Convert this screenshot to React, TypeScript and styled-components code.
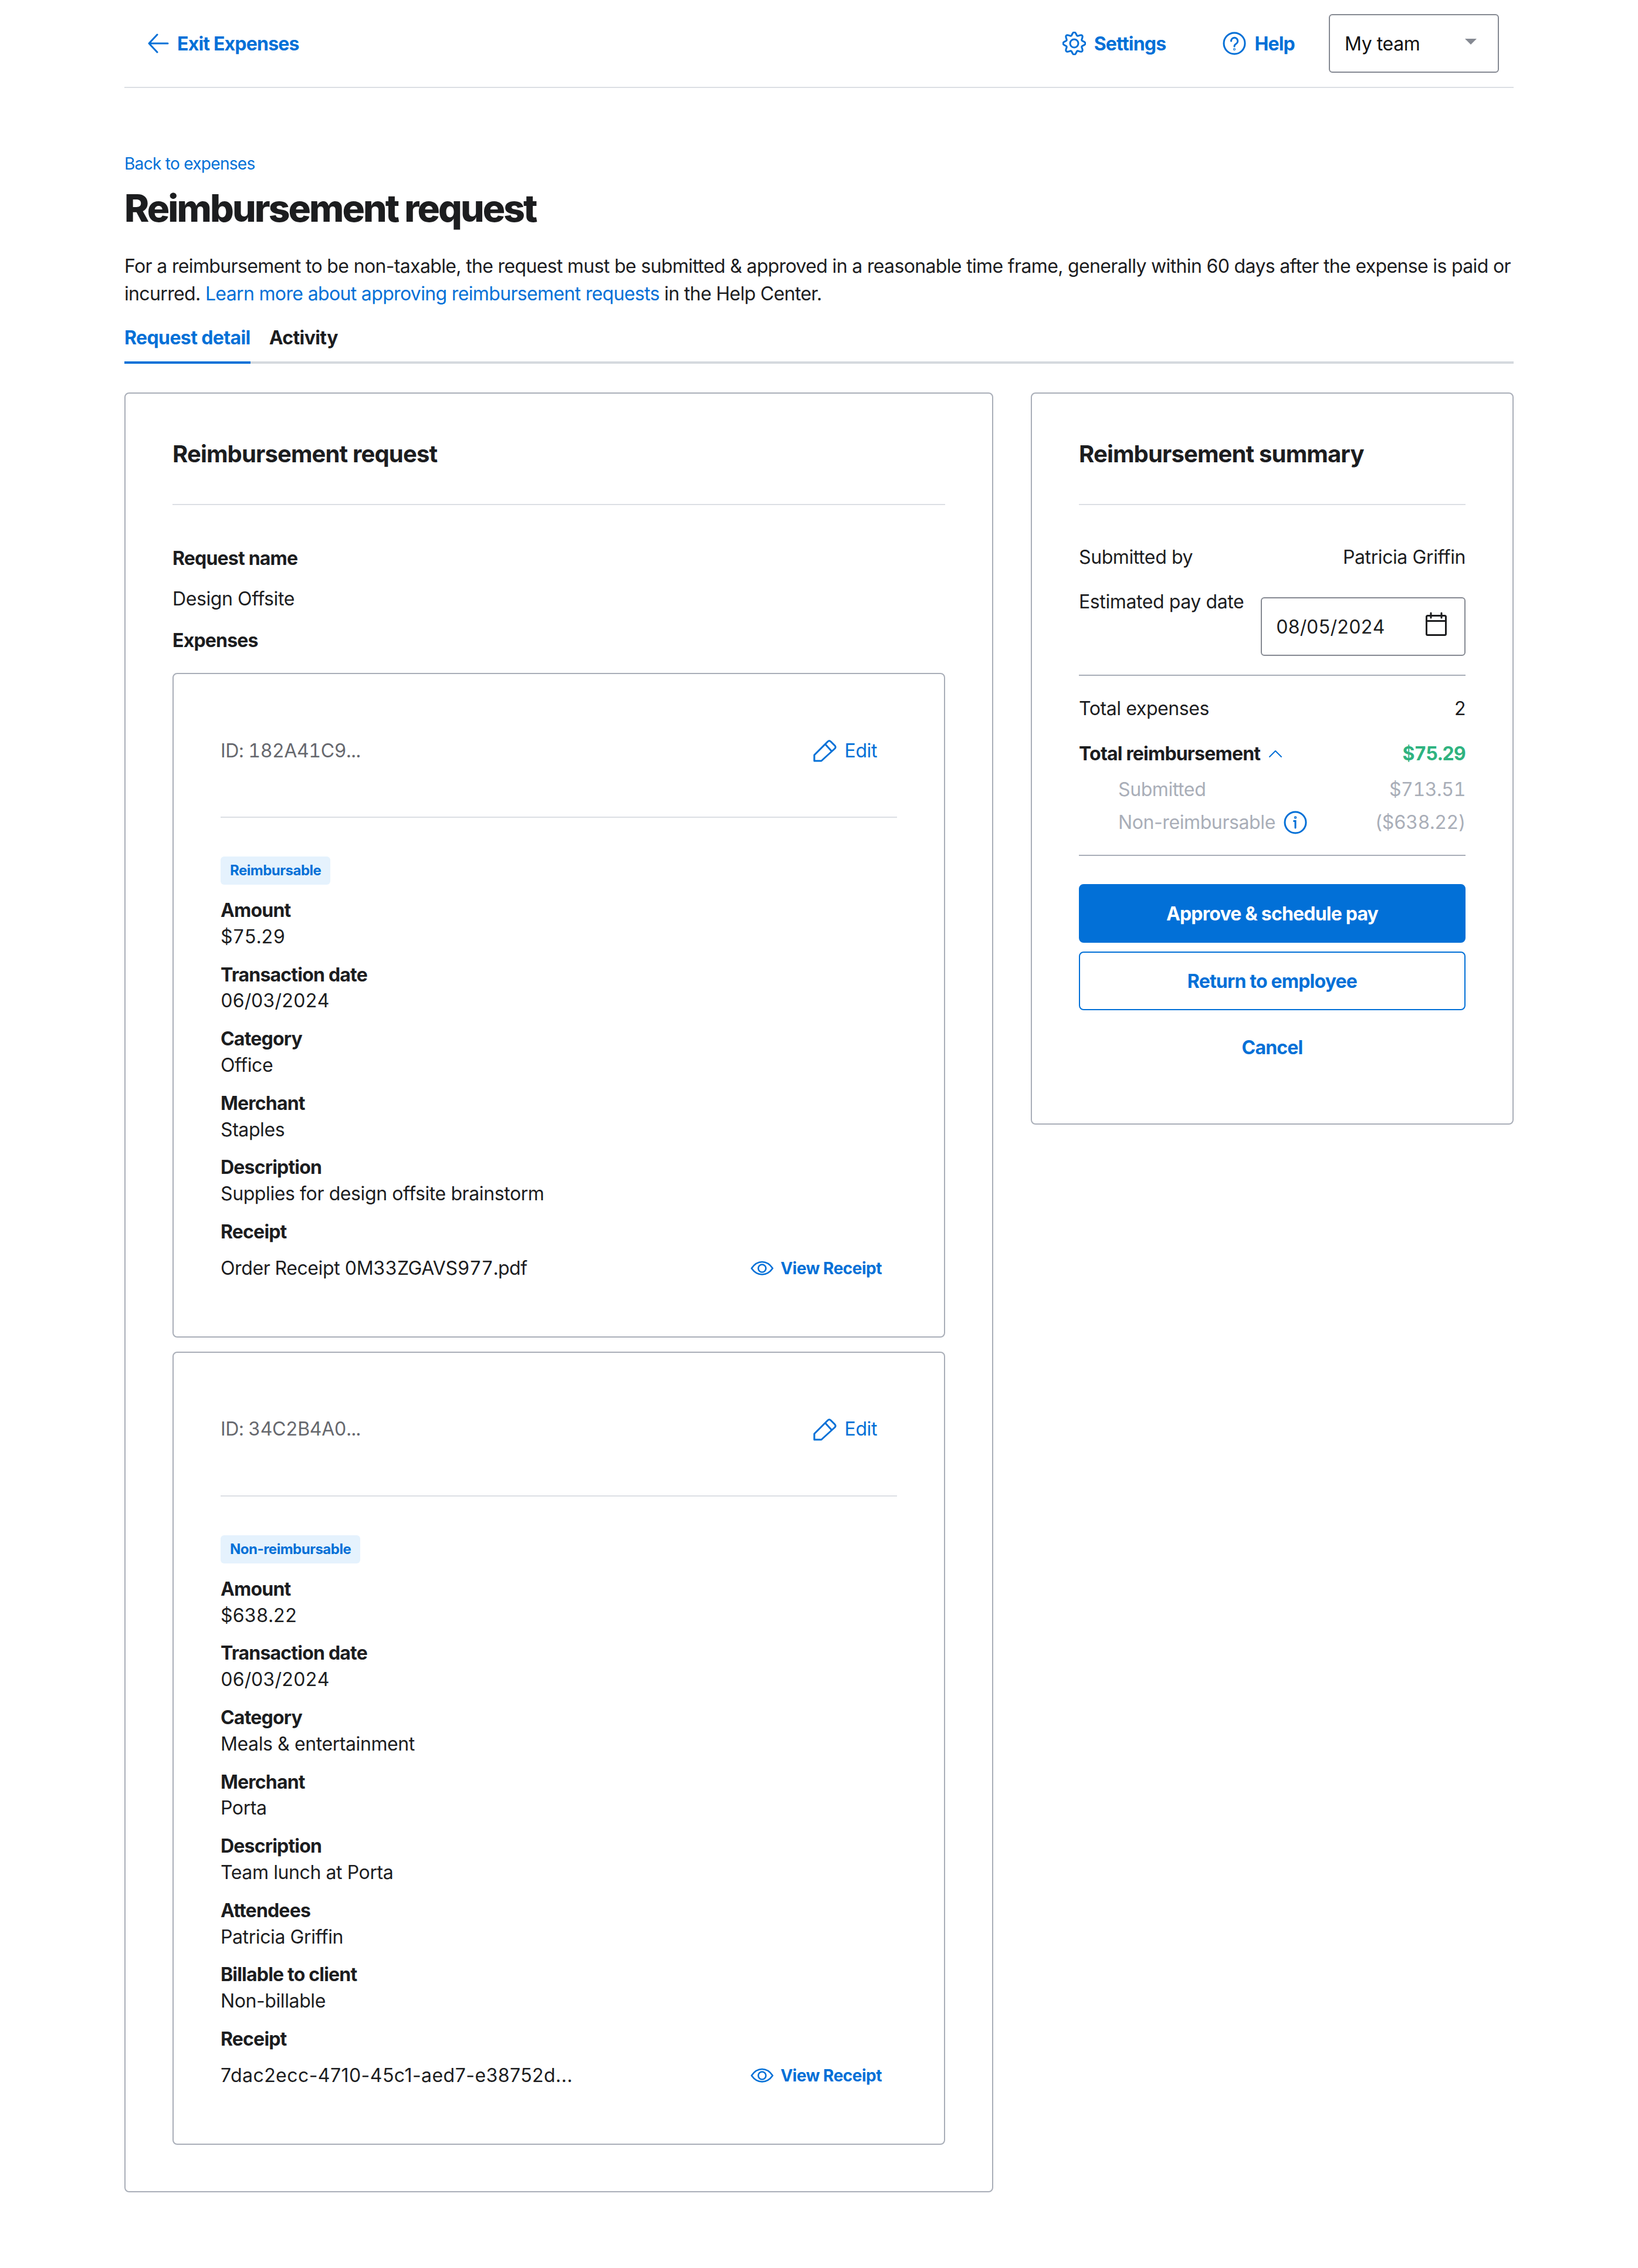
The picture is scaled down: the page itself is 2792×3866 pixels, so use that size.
import React from "react";
import styled, { createGlobalStyle } from "styled-components";

const BLUE = "#0270d7";
const INK = "#1c1d1f";
const EDGE = "#a9aeb8";
const RULE = "#dcdfe4";
const MUTED = "#a9aeb8";

const GlobalStyle = createGlobalStyle`
  html, body { margin: 0; padding: 0; background: #fff; }
  body {
    font-family: "Inter", "Liberation Sans", sans-serif;
    font-size: 32px;
    line-height: 45px;
    color: ${INK};
    letter-spacing: -0.4px;
  }
  * { box-sizing: border-box; }
`;

const Page = styled.div`
  width: 2792px;
  height: 3866px;
  padding: 0 212px;
`;

const TopBar = styled.header`
  height: 150px;
  padding: 0 25px 0 40px;
  border-bottom: 2px solid ${RULE};
  display: flex;
  align-items: center;
  justify-content: space-between;
`;

const NavLink = styled.a`
  display: flex;
  align-items: center;
  gap: 14px;
  color: ${BLUE};
  font-weight: 700;
  font-size: 32px;
  letter-spacing: -0.8px;
`;

const TopRight = styled.div`
  display: flex;
  align-items: center;
  gap: 97px;
`;

const TeamGroup = styled.div`
  display: flex;
  align-items: center;
  gap: 58px;
`;

const TeamSelect = styled.div`
  width: 290px;
  height: 100px;
  border: 2px solid #858992;
  border-radius: 6px;
  padding: 0 36px 0 25px;
  display: flex;
  align-items: center;
  justify-content: space-between;
  color: #111;
`;

const Caret = styled.span`
  width: 0;
  height: 0;
  margin-bottom: 6px;
  border-left: 10px solid transparent;
  border-right: 10px solid transparent;
  border-top: 10px solid #858992;
`;

const BackLink = styled.a`
  display: block;
  margin-top: 109px;
  color: ${BLUE};
  font-size: 28px;
  line-height: 40px;
  letter-spacing: -0.7px;
`;

const Title = styled.h1`
  margin: 16px 0 0;
  font-size: 64px;
  line-height: 80px;
  font-weight: 800;
  letter-spacing: -2.9px;
`;

const Intro = styled.p`
  margin: 35px 0 29px;
  line-height: 47px;
  letter-spacing: -0.65px;
`;

const InlineLink = styled.a`
  color: ${BLUE};
`;

const Tabs = styled.div`
  display: flex;
  gap: 32px;
  border-bottom: 4px solid #d5d9de;
`;

const Tab = styled.div<{ $active?: boolean }>`
  padding-bottom: 18px;
  margin-bottom: -4px;
  font-weight: 700;
  font-size: 32px;
  letter-spacing: -0.6px;
  color: ${(p) => (p.$active ? BLUE : INK)};
  border-bottom: 4px solid ${(p) => (p.$active ? BLUE : "transparent")};
`;

const Columns = styled.div`
  margin-top: 49px;
  display: flex;
  align-items: flex-start;
  gap: 64px;
`;

const Card = styled.section<{ $width: number; $bottom: number }>`
  width: ${(p) => p.$width}px;
  border: 2px solid ${EDGE};
  border-radius: 8px;
  padding: 78px 80px ${(p) => p.$bottom}px;
`;

const CardTitle = styled.h2`
  margin: 0;
  padding-bottom: 60px;
  border-bottom: 2px solid ${RULE};
  font-size: 40px;
  line-height: 50px;
  font-weight: 700;
  letter-spacing: -0.85px;
`;

const Strong = styled.div`
  font-weight: 700;
  font-size: 32px;
  letter-spacing: -0.8px;
`;

const RequestName = styled(Strong)`
  margin-top: 68px;
`;

const RequestValue = styled.div`
  margin-top: 24px;
`;

const ExpensesLabel = styled(Strong)`
  margin-top: 26px;
  margin-bottom: 33px;
`;

const ExpenseList = styled.div`
  display: flex;
  flex-direction: column;
  gap: 24px;
`;

const ExpenseCard = styled.article`
  border: 2px solid ${EDGE};
  border-radius: 8px;
  padding: 105px 80px 90px;
`;

const ExpenseHead = styled.div`
  height: 50px;
  padding-right: 34px;
  display: flex;
  align-items: center;
  justify-content: space-between;
`;

const ExpenseId = styled.span`
  color: #66686e;
  font-variant-numeric: tabular-nums;
`;

const EditLink = styled.a`
  display: flex;
  align-items: center;
  gap: 10px;
  color: ${BLUE};
`;

const ExpenseRule = styled.hr`
  margin: 88px 0 66px;
  border: 0;
  border-top: 2px solid ${RULE};
`;

const Badge = styled.span`
  display: inline-block;
  height: 48px;
  padding: 0 16px;
  border-radius: 6px;
  background: #e5f2fd;
  color: ${BLUE};
  font-size: 24px;
  line-height: 48px;
  font-weight: 700;
  letter-spacing: -0.5px;
  vertical-align: top;
`;

const Fields = styled.dl`
  margin: 22px 0 0;
  display: flex;
  flex-direction: column;
  gap: 20px;
`;

const Field = styled.div`
  line-height: 44.8px;
`;

const FieldLabel = styled.dt`
  font-weight: 700;
  font-size: 32px;
  letter-spacing: -0.8px;
`;

const FieldValue = styled.dd<{ $numeric?: boolean }>`
  margin: 0;
  font-variant-numeric: ${(p) => (p.$numeric ? "tabular-nums" : "normal")};
`;

const ReceiptRow = styled.dd`
  margin: 15px 0 0;
  padding-right: 26px;
  display: flex;
  align-items: center;
  justify-content: space-between;
`;

const ReceiptName = styled.span<{ $hash?: boolean }>`
  font-variant-numeric: ${(p) => (p.$hash ? "normal" : "tabular-nums")};
  letter-spacing: ${(p) => (p.$hash ? "0.45px" : "-0.4px")};
`;

const ViewLink = styled.a`
  display: flex;
  align-items: center;
  gap: 6px;
  color: ${BLUE};
  font-weight: 700;
  font-size: 28px;
  letter-spacing: -0.5px;
`;

const Row = styled.div<{ $muted?: boolean; $gap?: number; $indent?: boolean }>`
  display: flex;
  justify-content: space-between;
  align-items: flex-start;
  margin-top: ${(p) => p.$gap ?? 0}px;
  padding-left: ${(p) => (p.$indent ? 67 : 0)}px;
  color: ${(p) => (p.$muted ? MUTED : INK)};
`;

const DateBox = styled.div`
  width: 349px;
  height: 100px;
  margin-top: 15px;
  padding: 0 18px 0 24px;
  border: 2px solid #858992;
  border-radius: 6px;
  display: flex;
  align-items: center;
  justify-content: space-between;
  color: ${INK};
  font-variant-numeric: tabular-nums;
`;

const SummaryRule = styled.hr<{ $gap: number }>`
  margin: ${(p) => p.$gap}px 0 0;
  border: 0;
  border-top: 2px solid ${EDGE};
`;

const LabelWithIcon = styled.span`
  display: flex;
  align-items: center;
  gap: 14px;
`;

const Amount = styled.span`
  font-variant-numeric: tabular-nums;
`;

const Money = styled(Strong)`
  color: #2fb380;
  font-variant-numeric: tabular-nums;
`;

const Button = styled.button<{ $primary?: boolean }>`
  display: block;
  width: 100%;
  height: 100px;
  border: 2px solid ${BLUE};
  border-radius: 8px;
  background: ${(p) => (p.$primary ? BLUE : "#fff")};
  color: ${(p) => (p.$primary ? "#fff" : BLUE)};
  font: 700 32px/45px "Inter", "Liberation Sans", sans-serif;
  letter-spacing: -0.8px;
`;

const PrimaryButton = styled(Button)`
  margin-top: 48px;
`;

const SecondaryButton = styled(Button)`
  margin-top: 15px;
`;

const CancelLink = styled(Strong)`
  margin-top: 41px;
  text-align: center;
  color: ${BLUE};
`;

const gearPoints = Array.from({ length: 120 }, (_, i) => {
  const a = (i / 120) * Math.PI * 2 - Math.PI / 8;
  const r = 16.5 + 2.6 * Math.cos(a * 8);
  return `${(20 + r * Math.cos(a)).toFixed(2)},${(20 + r * Math.sin(a)).toFixed(2)}`;
}).join(" ");

const ArrowIcon = () => (
  <svg width="36" height="36" viewBox="0 0 36 36" fill="none" stroke={BLUE} strokeWidth="3" strokeLinecap="round" strokeLinejoin="round">
    <path d="M2 18h32M16 3 2 18l14 15" />
  </svg>
);

const GearIcon = () => (
  <svg width="40" height="40" viewBox="0 0 40 40" fill="none" stroke={BLUE} strokeWidth="3">
    <polygon points={gearPoints} strokeLinejoin="round" />
    <circle cx="20" cy="20" r="7" />
  </svg>
);

const HelpIcon = () => (
  <svg width="40" height="40" viewBox="0 0 40 40" fill="none" stroke={BLUE} strokeWidth="3" strokeLinecap="round">
    <circle cx="20" cy="20" r="18" />
    <path d="M14.5 16a5.6 5.6 0 1 1 8.4 4.8c-2 1.2-2.9 2.2-2.9 4.2" />
    <circle cx="20" cy="30" r="0.6" />
  </svg>
);

const PencilIcon = () => (
  <svg width="50" height="50" viewBox="0 0 50 50" fill="none" stroke={BLUE} strokeWidth="3" strokeLinejoin="round">
    <path d="M8 33 31 10c1.500-1.500 3.500-1.500 5 0l7 7c1.500 1.500 1.500 3.500 0 5L20 43H8z" />
    <path d="m27 15 11 12" />
  </svg>
);

const EyeIcon = () => (
  <svg width="50" height="50" viewBox="0 0 50 50" fill="none" stroke={BLUE} strokeWidth="2.600">
    <path d="M7 24c5-7.500 11-11 18-11s13 3.500 18 11c-5 7-11 10.500-18 10.500S12 31 7 24z" strokeLinejoin="round" />
    <circle cx="25" cy="24" r="6.500" />
  </svg>
);

const CalendarIcon = () => (
  <svg width="60" height="60" viewBox="0 0 60 60" fill="none" stroke={INK} strokeWidth="3" strokeLinecap="round">
    <rect x="13.500" y="11.500" width="33" height="33" rx="2" />
    <path d="M13.500 20.500h33M21 7v8M39 7v8" />
  </svg>
);

const ChevronUpIcon = () => (
  <svg width="24" height="16" viewBox="0 0 24 16" fill="none" stroke={BLUE} strokeWidth="2" strokeLinecap="round" strokeLinejoin="round">
    <path d="m2 13 10-10 10 10" />
  </svg>
);

const InfoIcon = () => (
  <svg width="40" height="40" viewBox="0 0 40 40" fill="none" stroke={BLUE} strokeWidth="3" strokeLinecap="round">
    <circle cx="20" cy="20" r="18" />
    <path d="M17.500 17.500H20v11.500" />
    <circle cx="20" cy="11.500" r="0.8" />
  </svg>
);

type FieldData = { label: string; value: string; numeric?: boolean };

type Expense = {
  id: string;
  badge: string;
  fields: FieldData[];
  receipt: string;
  hashReceipt?: boolean;
};

const expenses: Expense[] = [
  {
    id: "ID: 182A41C9...",
    badge: "Reimbursable",
    fields: [
      { label: "Amount", value: "$75.29", numeric: true },
      { label: "Transaction date", value: "06/03/2024", numeric: true },
      { label: "Category", value: "Office" },
      { label: "Merchant", value: "Staples" },
      { label: "Description", value: "Supplies for design offsite brainstorm" },
    ],
    receipt: "Order Receipt 0M33ZGAVS977.pdf",
  },
  {
    id: "ID: 34C2B4A0...",
    badge: "Non-reimbursable",
    fields: [
      { label: "Amount", value: "$638.22", numeric: true },
      { label: "Transaction date", value: "06/03/2024", numeric: true },
      { label: "Category", value: "Meals & entertainment" },
      { label: "Merchant", value: "Porta" },
      { label: "Description", value: "Team lunch at Porta" },
      { label: "Attendees", value: "Patricia Griffin" },
      { label: "Billable to client", value: "Non-billable" },
    ],
    receipt: "7dac2ecc-4710-45c1-aed7-e38752d...",
    hashReceipt: true,
  },
];

const App = () => {
  return (
    <Page>
      <GlobalStyle />
      <TopBar>
        <NavLink>
          <ArrowIcon />
          Exit Expenses
        </NavLink>
        <TopRight>
          <NavLink>
            <GearIcon />
            Settings
          </NavLink>
          <TeamGroup>
            <NavLink>
              <HelpIcon />
              Help
            </NavLink>
            <TeamSelect>
              My team
              <Caret />
            </TeamSelect>
          </TeamGroup>
        </TopRight>
      </TopBar>

      <BackLink>Back to expenses</BackLink>
      <Title>Reimbursement request</Title>
      <Intro>
        For a reimbursement to be non-taxable, the request must be submitted &amp; approved in a reasonable time frame, generally within 60 days after the expense is paid or incurred.{" "}
        <InlineLink>Learn more about approving reimbursement requests</InlineLink> in the Help Center.
      </Intro>
      <Tabs>
        <Tab $active>Request detail</Tab>
        <Tab>Activity</Tab>
      </Tabs>

      <Columns>
        <Card $width={1481} $bottom={79}>
          <CardTitle>Reimbursement request</CardTitle>
          <RequestName>Request name</RequestName>
          <RequestValue>Design Offsite</RequestValue>
          <ExpensesLabel>Expenses</ExpensesLabel>
          <ExpenseList>
            {expenses.map((expense) => (
              <ExpenseCard key={expense.id}>
                <ExpenseHead>
                  <ExpenseId>{expense.id}</ExpenseId>
                  <EditLink>
                    <PencilIcon />
                    Edit
                  </EditLink>
                </ExpenseHead>
                <ExpenseRule />
                <Badge>{expense.badge}</Badge>
                <Fields>
                  {expense.fields.map((field) => (
                    <Field key={field.label}>
                      <FieldLabel>{field.label}</FieldLabel>
                      <FieldValue $numeric={field.numeric}>{field.value}</FieldValue>
                    </Field>
                  ))}
                  <Field>
                    <FieldLabel>Receipt</FieldLabel>
                    <ReceiptRow>
                      <ReceiptName $hash={expense.hashReceipt}>{expense.receipt}</ReceiptName>
                      <ViewLink>
                        <EyeIcon />
                        View Receipt
                      </ViewLink>
                    </ReceiptRow>
                  </Field>
                </Fields>
              </ExpenseCard>
            ))}
          </ExpenseList>
        </Card>

        <Card $width={823} $bottom={107}>
          <CardTitle>Reimbursement summary</CardTitle>
          <Row $gap={66}>
            <span>Submitted by</span>
            <span>Patricia Griffin</span>
          </Row>
          <Row $gap={31}>
            <span>Estimated pay date</span>
            <DateBox>
              08/05/2024
              <CalendarIcon />
            </DateBox>
          </Row>
          <SummaryRule $gap={32} />
          <Row $gap={33}>
            <span>Total expenses</span>
            <span>2</span>
          </Row>
          <Row $gap={32}>
            <LabelWithIcon>
              <Strong>Total reimbursement</Strong>
              <ChevronUpIcon />
            </LabelWithIcon>
            <Money>$75.29</Money>
          </Row>
          <Row $gap={16} $muted $indent>
            <span>Submitted</span>
            <Amount>$713.51</Amount>
          </Row>
          <Row $gap={11} $muted $indent>
            <LabelWithIcon>
              Non-reimbursable
              <InfoIcon />
            </LabelWithIcon>
            <Amount>($638.22)</Amount>
          </Row>
          <SummaryRule $gap={33} />
          <PrimaryButton $primary>Approve &amp; schedule pay</PrimaryButton>
          <SecondaryButton>Return to employee</SecondaryButton>
          <CancelLink>Cancel</CancelLink>
        </Card>
      </Columns>
    </Page>
  );
};

export default App;
